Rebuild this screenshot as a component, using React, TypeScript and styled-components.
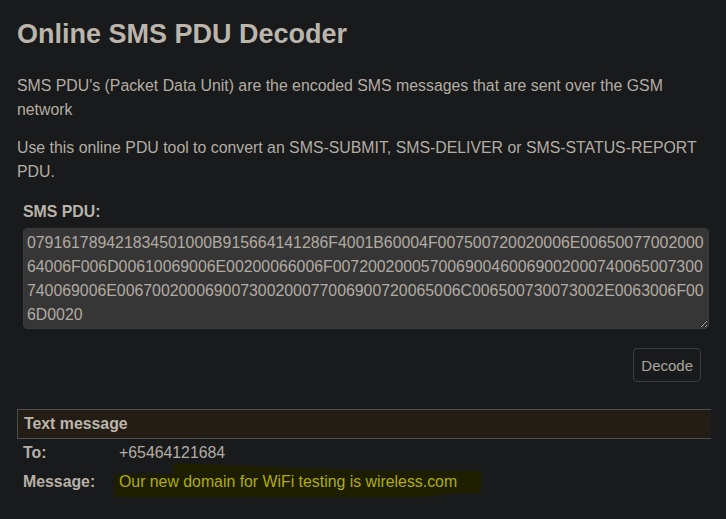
import React from "react";
import styled, { createGlobalStyle } from "styled-components";

const GlobalStyle = createGlobalStyle`
  html, body {
    margin: 0;
    padding: 0;
    background: #181a1b;
  }
  body {
    font-family: "Liberation Sans", Arial, sans-serif;
    font-size: 15.85px;
    color: #b4ada4;
  }
`;

const Page = styled.main`
  padding: 17px 15px 0 17px;
  display: flex;
  flex-direction: column;
`;

const Title = styled.h1`
  margin: 0 0 23px;
  font-size: 27px;
  line-height: 34px;
  font-weight: 700;
  color: #bcb5ab;
`;

const Para = styled.p`
  margin: 0 0 14px;
  line-height: 24px;
  max-width: 692px;
`;

const FormGroup = styled.section`
  margin-top: 2px;
  padding: 0 0 0 6px;
  display: flex;
  flex-direction: column;
  gap: 4px;
  width: 686px;
`;

const Label = styled.label`
  font-weight: 700;
  line-height: 24px;
  color: #bab3aa;
`;

const PduArea = styled.textarea`
  box-sizing: border-box;
  width: 686px;
  height: 101px;
  padding: 2px 3px;
  border: 1px solid #3a3b3c;
  border-radius: 4px;
  background: #363636;
  color: #b2aba2;
  font-family: "Liberation Sans", Arial, sans-serif;
  font-size: 15.85px;
  line-height: 24px;
  color-scheme: dark;
  outline: none;
  resize: both;
`;

const Actions = styled.div`
  display: flex;
  justify-content: flex-end;
  padding: 19px 10px 0 0;
  margin-bottom: 27px;
`;

const Button = styled.button`
  height: 34px;
  padding: 0 7px;
  border: 1px solid #3b3f41;
  border-radius: 4px;
  background: #181a1b;
  color: #aca59c;
  font-family: "Liberation Sans", Arial, sans-serif;
  font-size: 15px;
`;

const Result = styled.section`
  width: 694px;
  display: grid;
  grid-template-columns: 96px 1fr;
`;

const HeaderCell = styled.div`
  grid-column: 1 / -1;
  box-sizing: border-box;
  height: 30px;
  padding: 2px 6px;
  line-height: 24px;
  font-weight: 700;
  background: #231d16;
  border-top: 1px solid #4f4f4f;
  border-bottom: 1px solid #4f4f4f;
  border-left: 1px solid #4f4f4f;
  color: #bdb6ac;
`;

const KeyCell = styled.div`
  padding: 2px 6px 3px;
  line-height: 24px;
  font-weight: 700;
  color: #b8b1a8;
`;

const ValueCell = styled.div`
  padding: 2px 6px 3px;
  line-height: 24px;
`;

const Highlight = styled.mark`
  position: relative;
  background: transparent;
  color: #b1ad0c;
  z-index: 0;
  &::before {
    content: "";
    position: absolute;
    z-index: -1;
    left: -5px;
    top: -13px;
    width: 367px;
    height: 45px;
    background: #1d1d00;
    clip-path: polygon(
      0px 14px,
      59px 14px,
      59px 3px,
      266px 11px,
      367px 11px,
      367px 33px,
      346px 33px,
      266px 42px,
      150px 43px,
      0px 37px
    );
  }
`;

const pdu =
  "07916178942183450100" +
  "0B915664141286F4" +
  "001B60" +
  "004F0075007200200" +
  "06E0065007700200" +
  "064006F006D00610069006E0020" +
  "0066006F00720020" +
  "00570069004600690020" +
  "0074006500730074" +
  "0069006E00670020" +
  "006900730020" +
  "0077006900720065006C006500730073002E" +
  "0063006F006D0020";

export default function App() {
  return (
    <>
      <GlobalStyle />
      <Page>
        <Title>Online SMS PDU Decoder</Title>
        <Para>
          SMS PDU's (Packet Data Unit) are the encoded SMS messages that are sent over the GSM
          network
        </Para>
        <Para>
          Use this online PDU tool to convert an SMS-SUBMIT, SMS-DELIVER or SMS-STATUS-REPORT
          PDU.
        </Para>
        <FormGroup>
          <Label htmlFor="pdu">SMS PDU:</Label>
          <PduArea id="pdu" defaultValue={pdu} spellCheck={false} />
        </FormGroup>
        <Actions>
          <Button type="button">Decode</Button>
        </Actions>
        <Result>
          <HeaderCell>Text message</HeaderCell>
          <KeyCell>To:</KeyCell>
          <ValueCell>+65464121684</ValueCell>
          <KeyCell>Message:</KeyCell>
          <ValueCell>
            <Highlight>Our new domain for WiFi testing is wireless.com</Highlight>
          </ValueCell>
        </Result>
      </Page>
    </>
  );
}
